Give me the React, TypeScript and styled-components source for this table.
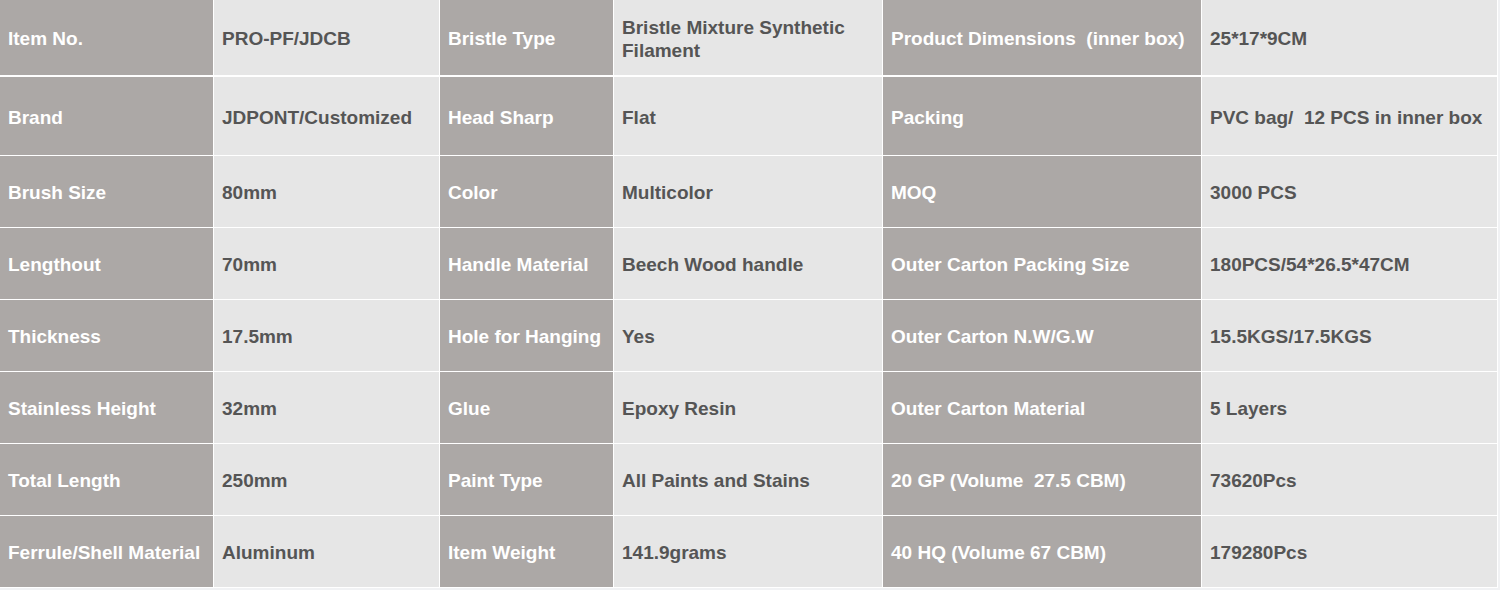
import React from "react";
import styled, { createGlobalStyle } from "styled-components";

const Global = createGlobalStyle`
  html, body { margin: 0; padding: 0; background: #f1f2f4; }
  body { font-family: "Liberation Sans", Arial, sans-serif; }
`;

const Table = styled.div`
  display: grid;
  width: 1497px;
  grid-template-columns: 213px 225px 173px 268px 318px 295px;
  grid-template-rows: 76px 78px repeat(6, 71px);
  gap: 1px;
  background: #ffffff;
  border-right: 1px solid #ffffff;
  border-bottom: 1px solid #ffffff;
  & > :nth-child(-n + 6) { margin-bottom: 1px; }
`;

const Cell = styled.div<{ $label?: boolean }>`
  display: flex;
  align-items: center;
  padding: 2px 8px 0;
  background: ${(p) => (p.$label ? "#aca8a6" : "#e6e6e6")};
  color: ${(p) => (p.$label ? "#ffffff" : "#555555")};
  font-size: 19px;
  font-weight: bold;
  line-height: 23px;
  white-space: pre-wrap;
  overflow: hidden;
`;

const rows: string[][] = [
  ["Item No.", "PRO-PF/JDCB", "Bristle Type", "Bristle Mixture Synthetic Filament", "Product Dimensions  (inner box)", "25*17*9CM"],
  ["Brand", "JDPONT/Customized", "Head Sharp", "Flat", "Packing", "PVC bag/  12 PCS in inner box"],
  ["Brush Size", "80mm", "Color", "Multicolor", "MOQ", "3000 PCS"],
  ["Lengthout", "70mm", "Handle Material", "Beech Wood handle", "Outer Carton Packing Size", "180PCS/54*26.5*47CM"],
  ["Thickness", "17.5mm", "Hole for Hanging", "Yes", "Outer Carton N.W/G.W", "15.5KGS/17.5KGS"],
  ["Stainless Height", "32mm", "Glue", "Epoxy Resin", "Outer Carton Material", "5 Layers"],
  ["Total Length", "250mm", "Paint Type", "All Paints and Stains", "20 GP (Volume  27.5 CBM)", "73620Pcs"],
  ["Ferrule/Shell Material", "Aluminum", "Item Weight", "141.9grams", "40 HQ (Volume 67 CBM)", "179280Pcs"],
];

export default function App() {
  return (
    <>
      <Global />
      <Table>
        {rows.map((r, ri) =>
          r.map((t, ci) => (
            <Cell key={`${ri}-${ci}`} $label={ci % 2 === 0}>
              {t}
            </Cell>
          ))
        )}
      </Table>
    </>
  );
}
